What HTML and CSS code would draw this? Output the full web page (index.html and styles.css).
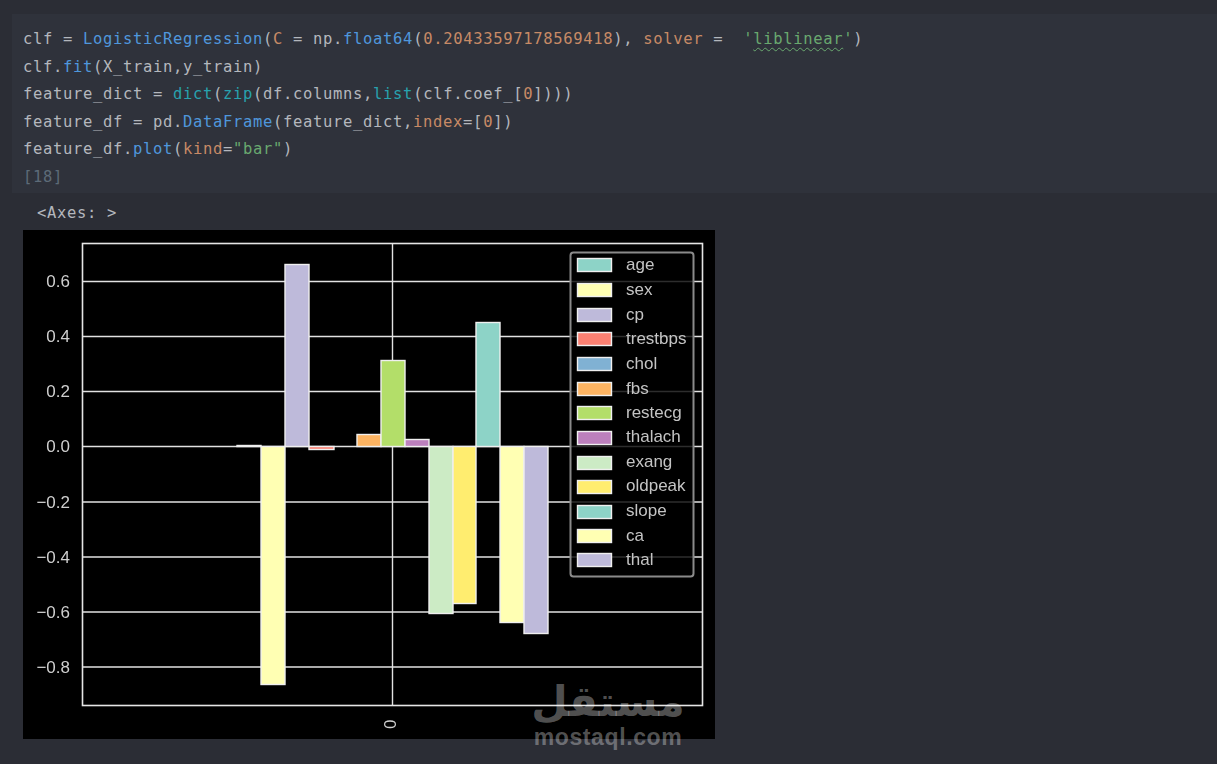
FILE: index.html
```html
<!DOCTYPE html>
<html lang="en">

<head>
    <meta charset="UTF-8">
    <meta name="viewport" content="width=device-width, initial-scale=1.0">
    <title>Feature coefficients</title>
    <link rel="stylesheet" href="styles.css">
</head>

<body>
    <div class="code-cell">
        <pre class="code">clf = <span class="fn">LogisticRegression</span>(<span class="arg">C</span> = np.<span class="fn">float64</span>(<span class="arg">0.20433597178569418</span>), <span class="arg">solver</span> =  <span class="str">'<span class="typo">liblinear</span>'</span>)
clf.<span class="fn">fit</span>(X_train,y_train)
feature_dict = <span class="builtin">dict</span>(<span class="builtin">zip</span>(df.columns,<span class="builtin">list</span>(clf.coef_[<span class="arg">0</span>])))
feature_df = pd.<span class="fn">DataFrame</span>(feature_dict,<span class="arg">index</span>=[<span class="arg">0</span>])
feature_df.<span class="fn">plot</span>(<span class="arg">kind</span>=<span class="str">"bar"</span>)
<span class="count">[18]</span></pre>
    </div>

    <div class="output">
        <div class="result-text">&lt;Axes: &gt;</div>

        <div class="chart-wrap">
            <svg class="chart" width="692" height="509" viewBox="23 230 692 509">
                <rect x="23" y="230" width="692" height="509" fill="#000" />

                <g class="grid">
                    <line x1="82" x2="702" y1="281.5" y2="281.5" />
                    <line x1="82" x2="702" y1="336.5" y2="336.5" />
                    <line x1="82" x2="702" y1="391.5" y2="391.5" />
                    <line x1="82" x2="702" y1="446.5" y2="446.5" />
                    <line x1="82" x2="702" y1="502" y2="502" />
                    <line x1="82" x2="702" y1="557" y2="557" />
                    <line x1="82" x2="702" y1="612" y2="612" />
                    <line x1="82" x2="702" y1="667" y2="667" />
                    <line x1="392.5" x2="392.5" y1="243" y2="705" />
                </g>

                <g class="bars">
                    <rect x="237" y="445.5" width="24" height="1" fill="#8dd3c7" />
                    <rect x="261" y="446.5" width="24" height="238" fill="#ffffb3" />
                    <rect x="285" y="264.5" width="24" height="182" fill="#bebada" />
                    <rect x="309" y="446.5" width="25" height="3" fill="#fb8072" />
                    <rect x="357" y="434.5" width="24" height="12" fill="#fdb462" />
                    <rect x="381" y="360.5" width="24" height="86" fill="#b3de69" />
                    <rect x="405" y="439.5" width="24" height="7" fill="#bc80bd" />
                    <rect x="429" y="446.5" width="24" height="167" fill="#ccebc5" />
                    <rect x="453" y="446.5" width="23" height="157" fill="#ffed6f" />
                    <rect x="476" y="322.5" width="24" height="124" fill="#8dd3c7" />
                    <rect x="500" y="446.5" width="24" height="176" fill="#ffffb3" />
                    <rect x="524" y="446.5" width="24" height="187" fill="#bebada" />
                </g>

                <rect class="frame" x="82.5" y="243.5" width="620" height="462" />

                <g class="ticks">
                    <text x="70" y="287">0.6</text>
                    <text x="70" y="342">0.4</text>
                    <text x="70" y="397">0.2</text>
                    <text x="70" y="452">0.0</text>
                    <text x="70" y="508">−0.2</text>
                    <text x="70" y="563">−0.4</text>
                    <text x="70" y="618">−0.6</text>
                    <text x="70" y="673">−0.8</text>
                </g>
                <text class="tick-x" transform="translate(396 729) rotate(-90)">0</text>

                <rect class="legend-box" x="570.5" y="252.5" width="123" height="324" rx="3" />
                <g class="patches">
                    <rect x="577.5" y="258.5" width="34" height="13" fill="#8dd3c7" />
                    <rect x="577.5" y="283.5" width="34" height="13" fill="#ffffb3" />
                    <rect x="577.5" y="308.5" width="34" height="13" fill="#bebada" />
                    <rect x="577.5" y="332.5" width="34" height="13" fill="#fb8072" />
                    <rect x="577.5" y="357.5" width="34" height="13" fill="#80b1d3" />
                    <rect x="577.5" y="382.5" width="34" height="13" fill="#fdb462" />
                    <rect x="577.5" y="406.5" width="34" height="13" fill="#b3de69" />
                    <rect x="577.5" y="431.5" width="34" height="13" fill="#bc80bd" />
                    <rect x="577.5" y="456.5" width="34" height="13" fill="#ccebc5" />
                    <rect x="577.5" y="480.5" width="34" height="13" fill="#ffed6f" />
                    <rect x="577.5" y="505.5" width="34" height="13" fill="#8dd3c7" />
                    <rect x="577.5" y="529.5" width="34" height="13" fill="#ffffb3" />
                    <rect x="577.5" y="553.5" width="34" height="13" fill="#bebada" />
                </g>
                <g class="legend-labels">
                    <text x="626" y="270">age</text>
                    <text x="626" y="295">sex</text>
                    <text x="626" y="320">cp</text>
                    <text x="626" y="344">trestbps</text>
                    <text x="626" y="369">chol</text>
                    <text x="626" y="394">fbs</text>
                    <text x="626" y="418">restecg</text>
                    <text x="626" y="442">thalach</text>
                    <text x="626" y="467">exang</text>
                    <text x="626" y="491">oldpeak</text>
                    <text x="626" y="516">slope</text>
                    <text x="626" y="541">ca</text>
                    <text x="626" y="565">thal</text>
                </g>
            </svg>

            <div class="watermark">
                <div class="watermark-ar" lang="ar" dir="rtl">مستقل</div>
                <div class="watermark-en">mostaql.com</div>
            </div>
        </div>
    </div>
</body>

</html>
```

FILE: styles.css
```css
* {
    box-sizing: border-box;
    margin: 0;
    padding: 0;
}

body {
    background-color: #2b2d35;
    padding-top: 14px;
    height: 764px;
    overflow: hidden;
    font-family: 'DejaVu Sans Mono', monospace;
}

.code-cell {
    background-color: #2f323b;
    margin-left: 12px;
    height: 179px;
    padding: 12px 0 0 11px;
}

.code {
    font-family: 'DejaVu Sans Mono', monospace;
    font-size: 15.5px;
    letter-spacing: 0.67px;
    line-height: 27.5px;
    color: #b4b7bd;
}

.fn {
    color: #4f97dc;
}

.builtin {
    color: #27a2ae;
}

.arg {
    color: #c78a66;
}

.str {
    color: #69a86f;
}

.typo {
    text-decoration: underline wavy #69a86f 1px;
    text-underline-offset: 3px;
}

.count {
    color: #5d6b78;
}

.output {
    padding-left: 23px;
}

.result-text {
    font-size: 15.5px;
    letter-spacing: 0.67px;
    line-height: 20px;
    height: 37px;
    padding: 10px 0 0 14px;
    color: #b4b7bd;
}

.chart-wrap {
    position: relative;
    width: 692px;
    height: 509px;
}

.chart {
    display: block;
    filter: blur(0.35px);
}

.grid line {
    stroke: #e2e2e2;
    stroke-width: 1.4;
}

.frame {
    fill: none;
    stroke: #e6e6e6;
    stroke-width: 1.6;
}

.bars rect,
.patches rect {
    stroke: #efefef;
    stroke-width: 1.4;
}

.ticks text {
    font-family: 'Liberation Sans', sans-serif;
    font-size: 17px;
    fill: #cfcfcf;
    text-anchor: end;
}

.tick-x {
    font-family: 'Liberation Sans', sans-serif;
    font-size: 17px;
    fill: #cfcfcf;
}

.legend-box {
    fill: rgba(0, 0, 0, 0.8);
    stroke: #8a8a8a;
    stroke-width: 2;
}

.legend-labels text {
    font-family: 'Liberation Sans', sans-serif;
    font-size: 17px;
    fill: #c4c4c4;
}

/* site watermark sits over the chart and runs past its bottom edge */
.watermark {
    position: absolute;
    left: 500px;
    top: 448px;
    width: 170px;
    text-align: center;
    color: rgba(255, 255, 255, 0.33);
}

.watermark-ar {
    font-family: 'DejaVu Sans', sans-serif;
    font-weight: bold;
    font-size: 42px;
    line-height: 47px;
}

.watermark-en {
    font-family: 'Liberation Sans', sans-serif;
    font-weight: bold;
    font-size: 23px;
    line-height: 24px;
    letter-spacing: 0.6px;
}
```
